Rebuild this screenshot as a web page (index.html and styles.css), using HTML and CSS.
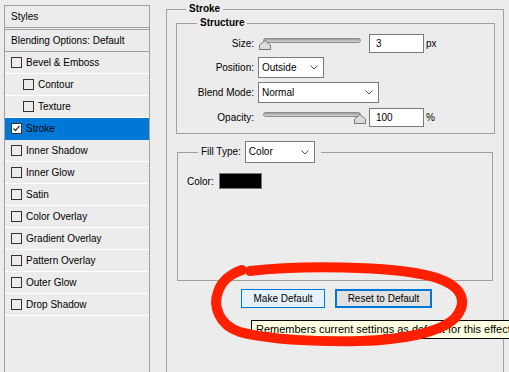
FILE: index.html
```html
<!DOCTYPE html>
<html lang="en">
<head>
    <meta charset="UTF-8">
    <title>Layer Style - Stroke</title>
    <link rel="stylesheet" href="styles.css">
</head>
<body>
    <div class="window">
        <div class="styles-panel">
            <div class="panel-head">Styles</div>
            <div class="panel-blend">Blending Options: Default</div>
            <ul class="effects">
                <li><span class="check"></span>Bevel &amp; Emboss</li>
                <li class="sub"><span class="check"></span>Contour</li>
                <li class="sub"><span class="check"></span>Texture</li>
                <li class="selected">
                    <svg class="check-on" width="11" height="11" viewBox="0 0 11 11">
                        <rect x="0.5" y="0.5" width="10" height="10" fill="#fff" stroke="#333"/>
                        <path d="M2.5 5.5 L4.5 7.5 L8.5 2.8" fill="none" stroke="#333" stroke-width="1.2"/>
                    </svg>Stroke
                </li>
                <li><span class="check"></span>Inner Shadow</li>
                <li><span class="check"></span>Inner Glow</li>
                <li><span class="check"></span>Satin</li>
                <li><span class="check"></span>Color Overlay</li>
                <li><span class="check"></span>Gradient Overlay</li>
                <li><span class="check"></span>Pattern Overlay</li>
                <li><span class="check"></span>Outer Glow</li>
                <li><span class="check"></span>Drop Shadow</li>
            </ul>
        </div>

        <fieldset class="group stroke">
            <legend>Stroke</legend>

            <fieldset class="group structure">
                <legend>Structure</legend>
                <div class="fields">
                    <label>Size:</label>
                    <div class="control">
                        <div class="slider">
                            <div class="track"></div>
                            <svg class="thumb thumb-left" width="12" height="10" viewBox="0 0 12 10">
                                <polygon points="6,0.5 11.5,5 11.5,9.5 0.5,9.5 0.5,5" fill="#dcdcdc" stroke="#777"/>
                            </svg>
                        </div>
                        <div class="num">3</div>
                        <span class="unit">px</span>
                    </div>

                    <label>Position:</label>
                    <div class="control">
                        <div class="select select-position">
                            <span>Outside</span>
                            <svg width="8" height="5" viewBox="0 0 8 5"><path d="M0.5 0.5 L4 4 L7.5 0.5" fill="none" stroke="#555"/></svg>
                        </div>
                    </div>

                    <label>Blend Mode:</label>
                    <div class="control">
                        <div class="select select-blend">
                            <span>Normal</span>
                            <svg width="8" height="5" viewBox="0 0 8 5"><path d="M0.5 0.5 L4 4 L7.5 0.5" fill="none" stroke="#555"/></svg>
                        </div>
                    </div>

                    <label>Opacity:</label>
                    <div class="control">
                        <div class="slider">
                            <div class="track"></div>
                            <svg class="thumb thumb-right" width="12" height="10" viewBox="0 0 12 10">
                                <polygon points="6,0.5 11.5,5 11.5,9.5 0.5,9.5 0.5,5" fill="#dcdcdc" stroke="#777"/>
                            </svg>
                        </div>
                        <div class="num">100</div>
                        <span class="unit">%</span>
                    </div>
                </div>
            </fieldset>

            <fieldset class="group fill">
                <legend>
                    <span>Fill Type:</span>
                    <div class="select select-fill">
                        <span>Color</span>
                        <svg width="8" height="5" viewBox="0 0 8 5"><path d="M0.5 0.5 L4 4 L7.5 0.5" fill="none" stroke="#555"/></svg>
                    </div>
                </legend>
                <div class="fill-body">
                    <div class="color-row">
                        <span>Color:</span>
                        <span class="swatch"></span>
                    </div>
                </div>
            </fieldset>

            <div class="buttons">
                <button class="btn btn-hover">Make Default</button>
                <button class="btn btn-focus">Reset to Default</button>
            </div>
        </fieldset>

        <div class="tooltip">Remembers current settings as default for this effect</div>

        <!-- hand drawn marker round the buttons -->
        <svg class="scribble" width="509" height="372" viewBox="0 0 509 372">
            <path d="M250 271 C300 265 390 266 430 276 C465 285 468 303 455 318 C440 333 400 340 360 341 C320 342 270 340 240 332 C218 325 213 305 218 292 C221 282 230 274 242 270"
                  fill="none" stroke="#ff2000" stroke-width="10" stroke-linecap="round"/>
        </svg>
    </div>
</body>
</html>
```

FILE: styles.css
```css
* {
    box-sizing: border-box;
}
body {
    margin: 0;
    background: #ececec;
    font: 10px "Liberation Sans", Arial, sans-serif;
    color: #000;
    overflow: hidden;
}
.window {
    position: relative;
    display: flex;
    align-items: flex-start;
    height: 372px;
    overflow: hidden;
}

/* left list of effects */
.styles-panel {
    width: 146px;
    height: 390px;
    margin: 5px 0 0 4px;
    border: 1px solid #a0a0a0;
    flex-shrink: 0;
}
.panel-head {
    height: 24px;
    line-height: 21px;
    padding-left: 6px;
    border-bottom: 3px double #a0a0a0;
}
.panel-blend {
    height: 22px;
    line-height: 21px;
    padding-left: 6px;
    border-bottom: 1px solid #a0a0a0;
}
.effects {
    list-style: none;
    margin: 0;
    padding: 0;
}
.effects li {
    display: flex;
    align-items: center;
    height: 22px;
    padding-left: 6px;
    border-bottom: 1px solid #fff;
}
.effects li.sub {
    padding-left: 18px;
}
.effects li.selected {
    background: #0078d7;
    border-bottom-color: #0078d7;
}
.check {
    width: 11px;
    height: 11px;
    border: 1px solid #333;
    margin-right: 4px;
}
.check-on {
    margin-right: 4px;
}

/* group boxes */
.group {
    margin: 0;
    padding: 0;
    border: 1px solid #a0a0a0;
    min-inline-size: 0;
}
.group legend {
    font-weight: bold;
    line-height: 12px;
    padding: 0 3px;
}
.stroke {
    width: 338px;
    height: 400px;
    margin: 3px 0 0 16px;
    flex-shrink: 0;
}
.stroke > legend {
    margin-left: 19px;
}
.structure {
    width: 319px;
    margin: 2px 0 0 9px;
    padding: 2px 0 4px 0;
}
.structure > legend {
    margin-left: 20px;
}
.fields {
    display: grid;
    grid-template-columns: 77px auto;
    grid-template-rows: 24px 24px 26px 24px;
    column-gap: 4px;
    align-items: center;
}
.fields label {
    text-align: right;
}
.control {
    display: flex;
    align-items: center;
}

.slider {
    position: relative;
    width: 103px;
    height: 12px;
    margin-left: 1px;
}
.track {
    height: 5px;
    margin: 1px 1px 0 4px;
    border: 1px solid #8c8c8c;
    border-radius: 3px;
    background: linear-gradient(#9a9a9a, #d8d8d8);
}
.thumb {
    position: absolute;
    top: 3px;
}
.thumb-left {
    left: 0;
}
.thumb-right {
    right: -4px;
}
.num {
    width: 55px;
    height: 19px;
    line-height: 17px;
    margin-left: 7px;
    padding-left: 6px;
    border: 1px solid #7a7a7a;
    background: #fff;
}
.unit {
    margin-left: 2px;
}

.select {
    display: flex;
    justify-content: space-between;
    align-items: center;
    height: 21px;
    padding: 0 5px 0 3px;
    border: 1px solid #7a7a7a;
    background: #fff;
    font-weight: normal;
}
.select-position {
    width: 66px;
}
.select-blend {
    width: 121px;
}
.select-fill {
    width: 70px;
    height: 22px;
}

.fill {
    width: 316px;
    margin: 7px 0 0 10px;
}
.fill > legend {
    display: flex;
    align-items: center;
    gap: 4px;
    margin-left: 20px;
    padding: 0 6px 0 3px;
    font-weight: normal;
    line-height: 22px;
}
.fill-body {
    height: 117px;
    padding: 10px 0 0 9px;
}
.color-row {
    display: flex;
    align-items: center;
    gap: 5px;
    height: 16px;
}
.swatch {
    width: 43px;
    height: 16px;
    border: 1px solid #777;
    background: #000;
}

.buttons {
    display: flex;
    justify-content: center;
    gap: 10px;
    margin-top: 8px;
    padding-left: 3px;
}
.btn {
    height: 19px;
    padding: 0;
    font: 10px "Liberation Sans", Arial, sans-serif;
    color: #000;
}
.btn-hover {
    width: 84px;
    background: #e5f1fb;
    border: 1px solid #0078d7;
}
.btn-focus {
    width: 97px;
    background: #e1e1e1;
    border: 2px solid #0078d7;
}

.tooltip {
    position: absolute;
    left: 251px;
    top: 320px;
    height: 19px;
    line-height: 17px;
    padding: 0 4px;
    border: 1px solid #000;
    background: #ffffe1;
    font-size: 11px;
    white-space: nowrap;
}
.scribble {
    position: absolute;
    left: 0;
    top: 0;
    pointer-events: none;
}
```
